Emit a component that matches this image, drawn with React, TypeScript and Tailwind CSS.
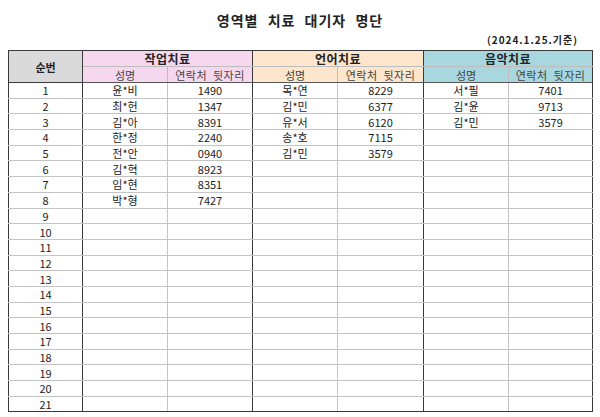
const groups = [
  {
    title: '작업치료',
    bg: 'bg-[#f5d8f0]',
    rows: [
      ['윤*비', '1490'],
      ['최*헌', '1347'],
      ['김*아', '8391'],
      ['한*정', '2240'],
      ['전*안', '0940'],
      ['김*혁', '8923'],
      ['임*현', '8351'],
      ['박*형', '7427'],
    ],
  },
  {
    title: '언어치료',
    bg: 'bg-[#fde6cc]',
    rows: [
      ['목*연', '8229'],
      ['김*민', '6377'],
      ['유*서', '6120'],
      ['송*호', '7115'],
      ['김*민', '3579'],
    ],
  },
  {
    title: '음악치료',
    bg: 'bg-[#a8d7e0]',
    rows: [
      ['서*필', '7401'],
      ['김*윤', '9713'],
      ['김*민', '3579'],
    ],
  },
];

const thick = 'border-[#3a3a3a]';

export default function App() {
  const rowNums = Array.from({ length: 21 }, (_, i) => i + 1);

  return (
    <div className="w-[600px] h-[417px] bg-white text-[#222] font-['Noto_Sans_CJK_KR','Noto_Sans',sans-serif] overflow-hidden">
      <div className="h-[33px] pt-[10px] text-center text-[14px] font-bold leading-[20px] tracking-[1px] [word-spacing:5px]">
        영역별 치료 대기자 명단
      </div>
      <div className="h-[17px] pr-[22px] text-right text-[10px] font-semibold leading-[14px] tracking-[1px]">
        (2024.1.25.기준)
      </div>
      <table className="ml-[8px] w-[584px] table-fixed border-collapse text-[11px]">
        <colgroup>
          <col className="w-[74px]" />
          <col className="w-[85px]" />
          <col className="w-[85px]" />
          <col className="w-[85px]" />
          <col className="w-[86px]" />
          <col className="w-[85px]" />
          <col className="w-[84px]" />
        </colgroup>
        <thead>
          <tr className="h-[16px]">
            <th
              rowSpan={2}
              className={`border-[1.5px] ${thick} bg-[#dadada] p-0 text-[11px] font-bold leading-[14px]`}
            >
              순번
            </th>
            {groups.map((g) => (
              <th
                key={g.title}
                colSpan={2}
                className={`border-[1.5px] border-b border-b-[#bdbdbd] ${thick} ${g.bg} p-0 text-[12px] font-bold leading-[15px] tracking-[0.5px]`}
              >
                {g.title}
              </th>
            ))}
          </tr>
          <tr className="h-[16px]">
            {groups.map((g) => (
              <>
                <th
                  key={g.title + 'a'}
                  className={`border-b border-b-[#555] border-l-[1.5px] ${thick} border-r border-r-[#bdbdbd] ${g.bg} p-0 font-normal leading-[14px] text-[#444]`}
                >
                  성명
                </th>
                <th
                  key={g.title + 'b'}
                  className={`border-b border-b-[#555] border-r-[1.5px] ${thick} ${g.bg} p-0 font-normal leading-[14px] tracking-[0.5px] [word-spacing:3px] text-[#444]`}
                >
                  연락처 뒷자리
                </th>
              </>
            ))}
          </tr>
        </thead>
        <tbody>
          {rowNums.map((n, i) => (
            <tr key={n} className="h-[15.7px]">
              <td
                className={`border-l-[1.5px] border-r-[1.5px] ${thick} border-b ${
                  n === 21 ? 'border-b-[1.5px] border-b-[#3a3a3a]' : 'border-b-[#c4c4c4]'
                } p-0 text-center leading-[14px]`}
              >
                {n}
              </td>
              {groups.map((g) => {
                const r = g.rows[i];
                const bottom =
                  n === 21 ? 'border-b-[1.5px] border-b-[#3a3a3a]' : 'border-b border-b-[#c4c4c4]';
                return (
                  <>
                    <td
                      key={g.title + n + 'a'}
                      className={`border-l-[1.5px] ${thick} border-r border-r-[#c4c4c4] ${bottom} p-0 text-center leading-[14px]`}
                    >
                      {r ? r[0] : ''}
                    </td>
                    <td
                      key={g.title + n + 'b'}
                      className={`border-r-[1.5px] ${thick} ${bottom} p-0 text-center leading-[14px]`}
                    >
                      {r ? r[1] : ''}
                    </td>
                  </>
                );
              })}
            </tr>
          ))}
        </tbody>
      </table>
    </div>
  );
}
